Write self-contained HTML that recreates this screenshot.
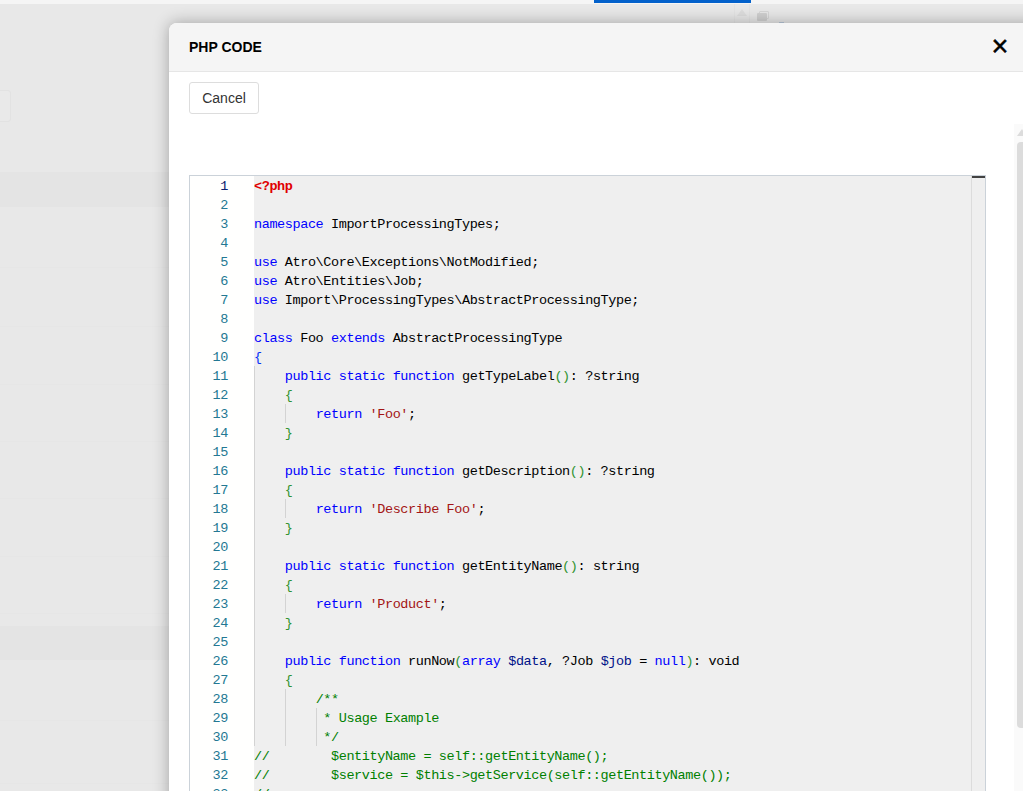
<!DOCTYPE html>
<html lang="en">
<head>
<meta charset="utf-8">
<title>PHP Code</title>
<style>
*{box-sizing:border-box;margin:0;padding:0}
html,body{width:1023px;height:791px;overflow:hidden}
body{position:relative;background:#e8e8e8;font-family:"Liberation Sans",Arial,sans-serif;font-size:14px;color:#333}
.topstrip{position:absolute;left:0;top:0;width:1023px;height:4px;background:#f5f5f5}
.bluebar{position:absolute;left:594px;top:0;width:157px;height:3px;background:#0361cb}
.band{position:absolute;left:0;width:169px;background:#e4e4e4}
.leftbox{position:absolute;left:-4px;top:90px;width:15px;height:32px;border:1px solid #e2e2e2;border-radius:3px;background:#e9e9e9}
.rowline{position:absolute;left:0;width:169px;height:1px;background:#e6e6e6}
.gbtn{position:absolute;left:734px;top:4px;width:16px;height:19px;border-left:1px solid #e3e3e3;border-right:1px solid #e3e3e3}
.gtri{position:absolute;left:736.5px;top:9px;width:0;height:0;border-left:5px solid transparent;border-right:5px solid transparent;border-bottom:7px solid #dddddd}
.gsq1{position:absolute;left:759px;top:11px;width:10px;height:8px;border:1px solid #d6d6d6;border-radius:1px}
.gsq2{position:absolute;left:757px;top:13px;width:10px;height:8px;background:#d0d0d0;border-radius:1px}
.gblue{position:absolute;left:779px;top:22px;width:5px;height:1px;background:#b9c9da}
.modal{position:absolute;left:169px;top:23px;width:900px;height:800px;background:#fff;border-radius:8px 0 0 0;box-shadow:0 0 16px rgba(0,0,0,.31)}
.mhead{position:absolute;left:0;top:0;right:0;height:49px;background:#f5f5f5;border-bottom:1px solid #e6e6e6;border-radius:8px 0 0 0}
.mtitle{position:absolute;left:20px;top:16px;font-weight:bold;font-size:14px;line-height:16px;color:#000;letter-spacing:0}
.mclose{position:absolute;left:822.6px;top:8px;font:normal 29px/30px "Liberation Sans",Arial,sans-serif;color:#000;-webkit-text-stroke:.5px #000}
.btn{position:absolute;left:20px;top:59px;width:70px;height:32px;border:1px solid #ddd;border-radius:3px;background:#fff;font-size:14px;line-height:31px;text-align:center;color:#333}
.editor{position:absolute;left:20px;top:152px;width:797px;height:700px;border:1px solid #cbd2d9;background:#efefef;overflow:hidden}
.gutter{position:absolute;left:0;top:0;width:64px;height:100%;background:#fffffe}
.ln{position:absolute;left:0;width:38px;text-align:right;color:#237893;font:13.5px/19px "Liberation Mono","DejaVu Sans Mono",monospace;letter-spacing:-.4px}
.ln.act{color:#0b216f}
.code{position:absolute;left:64px;top:1px;font:13.5px/19px "Liberation Mono","DejaVu Sans Mono",monospace;letter-spacing:-.4px;color:#000;white-space:pre}
.code div{height:19px}
.k{color:#0000ff}.s{color:#a31515}.c{color:#008000}.v{color:#001188}.t{color:#e00000;font-weight:bold}.b1{color:#0431fa}.b2{color:#319331}
.guide{position:absolute;width:1px;background:#d3d3d3}
.ruler{position:absolute;right:0;top:0;width:14px;height:100%;border-left:1px solid #dcdcdc}
.ruler i{position:absolute;left:0;top:0;width:13px;height:2px;background:#424242}
.sbar{position:absolute;left:845px;top:101px;width:20px;height:700px;background:#fafafa}
.sthumb{position:absolute;left:3px;top:18px;width:14px;height:586px;border-radius:4px;background:#dcdcdc}
.sarrow{position:absolute;left:3px;top:5px;width:0;height:0;border-left:5px solid transparent;border-right:5px solid transparent;border-bottom:7px solid #dcdcdc}
</style>
</head>
<body>
<div class="topstrip"></div>
<div class="bluebar"></div>
<div class="band" style="top:172px;height:35px"></div>
<div class="band" style="top:626px;height:34px"></div>
<div class="leftbox"></div>
<div class="rowline" style="top:267px"></div>
<div class="rowline" style="top:326px"></div>
<div class="rowline" style="top:384px"></div>
<div class="rowline" style="top:441px"></div>
<div class="rowline" style="top:498px"></div>
<div class="rowline" style="top:556px"></div>
<div class="rowline" style="top:613px"></div>
<div class="rowline" style="top:720px"></div>
<div class="rowline" style="top:783px"></div>
<div class="gbtn"></div><div class="gtri"></div><div class="gsq1"></div><div class="gsq2"></div><div class="gblue"></div>

<div class="modal">
  <div class="mhead">
    <div class="mtitle">PHP CODE</div>
    <div class="mclose">×</div>
  </div>
  <div class="btn">Cancel</div>
  <div class="sbar"><div class="sarrow"></div><div class="sthumb"></div></div>
  <div class="editor">
    <div class="gutter" id="gutter"><div class="ln act" style="top:1px">1</div><div class="ln" style="top:20px">2</div><div class="ln" style="top:39px">3</div><div class="ln" style="top:58px">4</div><div class="ln" style="top:77px">5</div><div class="ln" style="top:96px">6</div><div class="ln" style="top:115px">7</div><div class="ln" style="top:134px">8</div><div class="ln" style="top:153px">9</div><div class="ln" style="top:172px">10</div><div class="ln" style="top:191px">11</div><div class="ln" style="top:210px">12</div><div class="ln" style="top:229px">13</div><div class="ln" style="top:248px">14</div><div class="ln" style="top:267px">15</div><div class="ln" style="top:286px">16</div><div class="ln" style="top:305px">17</div><div class="ln" style="top:324px">18</div><div class="ln" style="top:343px">19</div><div class="ln" style="top:362px">20</div><div class="ln" style="top:381px">21</div><div class="ln" style="top:400px">22</div><div class="ln" style="top:419px">23</div><div class="ln" style="top:438px">24</div><div class="ln" style="top:457px">25</div><div class="ln" style="top:476px">26</div><div class="ln" style="top:495px">27</div><div class="ln" style="top:514px">28</div><div class="ln" style="top:533px">29</div><div class="ln" style="top:552px">30</div><div class="ln" style="top:571px">31</div><div class="ln" style="top:590px">32</div><div class="ln" style="top:609px">33</div></div><!--g-->
    <div class="code" id="code"><div><span class="t">&lt;?php</span></div><div></div><div><span class="k">namespace</span> ImportProcessingTypes;</div><div></div><div><span class="k">use</span> Atro\Core\Exceptions\NotModified;</div><div><span class="k">use</span> Atro\Entities\Job;</div><div><span class="k">use</span> Import\ProcessingTypes\AbstractProcessingType;</div><div></div><div><span class="k">class</span> Foo <span class="k">extends</span> AbstractProcessingType</div><div><span class="b1">{</span></div><div>    <span class="k">public</span> <span class="k">static</span> <span class="k">function</span> getTypeLabel<span class="b2">()</span>: ?string</div><div>    <span class="b2">{</span></div><div>        <span class="k">return</span> <span class="s">&#x27;Foo&#x27;</span>;</div><div>    <span class="b2">}</span></div><div></div><div>    <span class="k">public</span> <span class="k">static</span> <span class="k">function</span> getDescription<span class="b2">()</span>: ?string</div><div>    <span class="b2">{</span></div><div>        <span class="k">return</span> <span class="s">&#x27;Describe Foo&#x27;</span>;</div><div>    <span class="b2">}</span></div><div></div><div>    <span class="k">public</span> <span class="k">static</span> <span class="k">function</span> getEntityName<span class="b2">()</span>: string</div><div>    <span class="b2">{</span></div><div>        <span class="k">return</span> <span class="s">&#x27;Product&#x27;</span>;</div><div>    <span class="b2">}</span></div><div></div><div>    <span class="k">public</span> <span class="k">function</span> runNow<span class="b2">(</span><span class="k">array</span> <span class="v">$data</span>, ?Job <span class="v">$job</span> = <span class="k">null</span><span class="b2">)</span>: void</div><div>    <span class="b2">{</span></div><div>        <span class="c">/**</span></div><div>        <span class="c"> * Usage Example</span></div><div>        <span class="c"> */</span></div><div><span class="c">//        $entityName = self::getEntityName();</span></div><div><span class="c">//        $service = $this-&gt;getService(self::getEntityName());</span></div><div><span class="c">//</span></div></div><!--c-->

    <div class="guide" style="left:64px;top:190px;height:380px"></div>
    <div class="guide" style="left:95px;top:228px;height:19px"></div>
    <div class="guide" style="left:95px;top:323px;height:19px"></div>
    <div class="guide" style="left:95px;top:418px;height:19px"></div>
    <div class="guide" style="left:95px;top:513px;height:57px"></div>
    <div class="guide" style="left:126px;top:532px;height:38px"></div>
    <div class="ruler"><i></i></div>
  </div>
</div>
</body>
</html>
